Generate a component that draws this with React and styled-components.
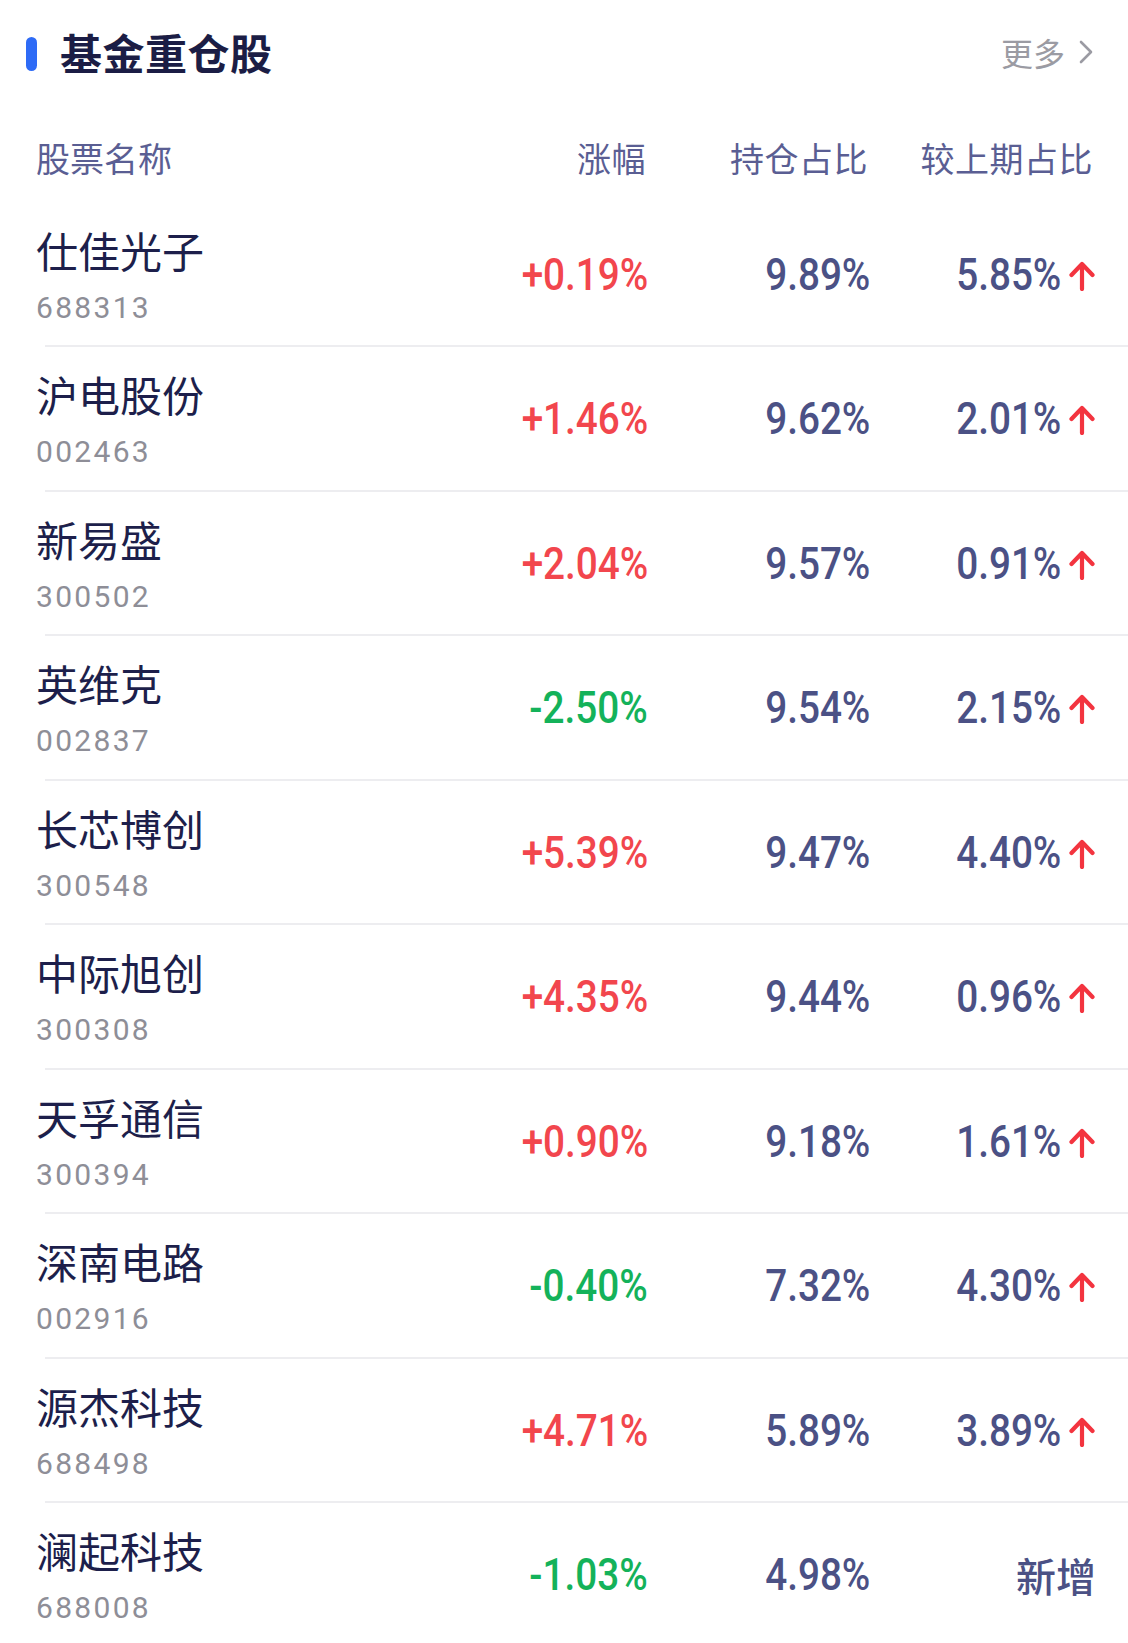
import React from "react";
import styled, { createGlobalStyle } from "styled-components";

const Global = createGlobalStyle`
  html, body { margin: 0; padding: 0; background: #ffffff; }
  body { font-family: "Noto Sans CJK SC", "Noto Sans", sans-serif; -webkit-font-smoothing: antialiased; }
  * { box-sizing: border-box; }
`;

const Page = styled.div`
  width: 1128px;
  background: #ffffff;
`;

const TitleBar = styled.div`
  height: 108px;
  padding: 0 35px 4px 26px;
  display: flex;
  align-items: center;
  justify-content: space-between;
`;

const TitleGroup = styled.div`
  display: flex;
  align-items: center;
  gap: 23px;
`;

const Pill = styled.span`
  width: 11px;
  height: 34px;
  border-radius: 6px;
  background: #2e6bf6;
  margin-top: 4px;
`;

const Title = styled.h1`
  margin: 0;
  font-size: 42px;
  line-height: 52px;
  font-weight: 700;
  color: #1b1d45;
  letter-spacing: 0.5px;
`;

const More = styled.a`
  display: flex;
  align-items: center;
  gap: 14px;
  font-size: 32px;
  line-height: 40px;
  color: #9b9ba3;
  text-decoration: none;
`;

const Table = styled.div`
  display: flex;
  flex-direction: column;
`;

const grid = `
  display: grid;
  grid-template-columns: 1fr 220px 222px 225px;
  align-items: center;
  padding: 0 35px 0 36px;
`;

const HeadRow = styled.div`
  ${grid}
  height: 94.5px;
  padding-top: 6px;
`;

const HeadCell = styled.div`
  font-size: 34px;
  line-height: 44px;
  color: #5a5e93;
  text-align: ${(p) => (p.$left ? "left" : "right")};
  letter-spacing: ${(p) => (p.$left ? "0" : "0.5px")};
`;

const Row = styled.div`
  ${grid}
  height: 144.5px;
  background: ${(p) =>
    p.$last
      ? "none"
      : "linear-gradient(#ededf0, #ededf0) no-repeat 45px 100% / calc(100% - 45px) 2px"};
`;

const NameCell = styled.div`
  display: flex;
  flex-direction: column;
`;

const Name = styled.div`
  font-size: 42px;
  line-height: 52px;
  color: #1d1f4b;
`;

const Code = styled.div`
  margin-top: 14px;
  font-family: Roboto, "Liberation Sans", sans-serif;
  font-size: 30px;
  line-height: 36px;
  letter-spacing: 2.3px;
  color: #8e8e97;
`;

const NumCell = styled.div`
  display: flex;
  justify-content: flex-end;
  align-items: center;
  gap: 8px;
  margin-right: -2px;
`;

const Num = styled.span`
  display: inline-block;
  font-family: Roboto, "Liberation Sans", sans-serif;
  font-weight: 500;
  font-size: 45px;
  line-height: 52px;
  color: ${(p) => p.$color || "#4b5185"};
  transform: scaleX(0.86);
  transform-origin: right center;
  white-space: nowrap;
`;

const NewTag = styled.span`
  font-size: 40px;
  line-height: 52px;
  font-weight: 500;
  color: #4b5185;
  margin-right: -1px;
`;

const Arrow = () => (
  <svg width="26" height="30" viewBox="0 0 26 30" style={{ marginTop: "2px" }}>
    <path
      d="M13 28 V3.5 M2.5 14 L13 3 L23.5 14"
      fill="none"
      stroke="#f3343f"
      strokeWidth="4.2"
      strokeLinecap="round"
      strokeLinejoin="round"
    />
  </svg>
);

const Chevron = () => (
  <svg width="14" height="24" viewBox="0 0 14 24">
    <path d="M2 2 L12 12 L2 22" fill="none" stroke="#9b9ba3" strokeWidth="2.6" strokeLinecap="round" strokeLinejoin="round" />
  </svg>
);

const data = [
  ["仕佳光子", "688313", "+0.19%", "9.89%", "5.85%"],
  ["沪电股份", "002463", "+1.46%", "9.62%", "2.01%"],
  ["新易盛", "300502", "+2.04%", "9.57%", "0.91%"],
  ["英维克", "002837", "-2.50%", "9.54%", "2.15%"],
  ["长芯博创", "300548", "+5.39%", "9.47%", "4.40%"],
  ["中际旭创", "300308", "+4.35%", "9.44%", "0.96%"],
  ["天孚通信", "300394", "+0.90%", "9.18%", "1.61%"],
  ["深南电路", "002916", "-0.40%", "7.32%", "4.30%"],
  ["源杰科技", "688498", "+4.71%", "5.89%", "3.89%"],
  ["澜起科技", "688008", "-1.03%", "4.98%", null],
];

export default function App() {
  return (
    <Page>
      <Global />
      <TitleBar>
        <TitleGroup>
          <Pill />
          <Title>基金重仓股</Title>
        </TitleGroup>
        <More href="#">
          更多
          <Chevron />
        </More>
      </TitleBar>
      <Table>
        <HeadRow>
          <HeadCell $left>股票名称</HeadCell>
          <HeadCell>涨幅</HeadCell>
          <HeadCell>持仓占比</HeadCell>
          <HeadCell>较上期占比</HeadCell>
        </HeadRow>
        {data.map(([name, code, chg, hold, prev], i) => (
          <Row key={code} $last={i === data.length - 1}>
            <NameCell>
              <Name>{name}</Name>
              <Code>{code}</Code>
            </NameCell>
            <NumCell>
              <Num $color={chg.startsWith("-") ? "#14b25a" : "#f2464d"}>{chg}</Num>
            </NumCell>
            <NumCell>
              <Num>{hold}</Num>
            </NumCell>
            <NumCell>
              {prev ? (
                <>
                  <Num>{prev}</Num>
                  <Arrow />
                </>
              ) : (
                <NewTag>新增</NewTag>
              )}
            </NumCell>
          </Row>
        ))}
      </Table>
    </Page>
  );
}
